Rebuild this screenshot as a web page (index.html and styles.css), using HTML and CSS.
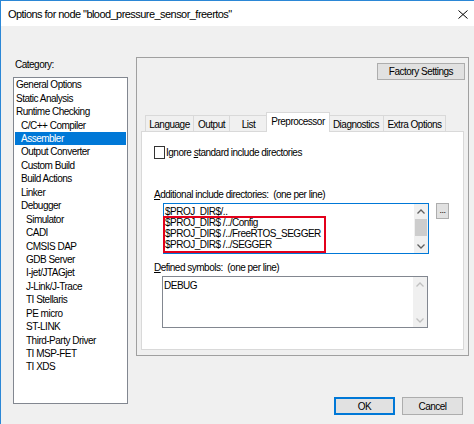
FILE: index.html
```html
<!DOCTYPE html>
<html>
<head>
<meta charset="utf-8">
<link rel="stylesheet" href="styles.css">
</head>
<body>
<div class="window">
  <div class="titlebar">
    <span class="title">Options for node "blood_pressure_sensor_freertos"</span>
    <svg class="close" width="10" height="9" viewBox="0 0 10 9"><path d="M0.5 0.5 L9.5 8.5 M9.5 0.5 L0.5 8.5" stroke="#000" stroke-width="1" fill="none"/></svg>
  </div>
  <div class="client">
    <div class="leftcol">
      <div class="cat-label">Category:</div>
      <div class="listbox">
        <div class="item l0">General Options</div>
        <div class="item l0">Static Analysis</div>
        <div class="item l0">Runtime Checking</div>
        <div class="item l1">C/C++ Compiler</div>
        <div class="item l1 sel">Assembler</div>
        <div class="item l1">Output Converter</div>
        <div class="item l1">Custom Build</div>
        <div class="item l1">Build Actions</div>
        <div class="item l1">Linker</div>
        <div class="item l1">Debugger</div>
        <div class="item l2">Simulator</div>
        <div class="item l2">CADI</div>
        <div class="item l2">CMSIS DAP</div>
        <div class="item l2">GDB Server</div>
        <div class="item l2">I-jet/JTAGjet</div>
        <div class="item l2">J-Link/J-Trace</div>
        <div class="item l2">TI Stellaris</div>
        <div class="item l2">PE micro</div>
        <div class="item l2">ST-LINK</div>
        <div class="item l2">Third-Party Driver</div>
        <div class="item l2">TI MSP-FET</div>
        <div class="item l2">TI XDS</div>
      </div>
    </div>
    <div class="rightcol">
      <div class="frame">
        <div class="factory-row"><div class="btn factory">Factory Settings</div></div>
        <div class="tabs">
          <div class="tab t-lang">Language</div>
          <div class="tab t-out">Output</div>
          <div class="tab t-list">List</div>
          <div class="tab t-pre sel">Preprocessor</div>
          <div class="tab t-diag">Diagnostics</div>
          <div class="tab t-extra">Extra Options</div>
        </div>
        <div class="page">
          <div class="check-row">
            <span class="checkbox"></span>
            <span class="check-label">Ignore <u>s</u>tandard include directories</span>
          </div>
          <div class="label inc-label"><u>A</u>dditional include directories:&nbsp; (one per line)</div>
          <div class="inc-row">
            <div class="edit focused">
              <div class="edit-text">
                <div class="line">$PROJ_DIR$/..</div>
                <div class="line">$PROJ_DIR$ /../Config</div>
                <div class="line">$PROJ_DIR$ /../FreeRTOS_SEGGER</div>
                <div class="line">$PROJ_DIR$ /../SEGGER</div>
              </div>
              <div class="vscroll">
                <div class="arrow"><svg width="8" height="5" viewBox="0 0 8 5"><path d="M0.5 4.5 L4 1 L7.5 4.5" stroke="#606060" stroke-width="1.3" fill="none"/></svg></div>
                <div class="track"><div class="thumb"></div></div>
                <div class="arrow"><svg width="8" height="5" viewBox="0 0 8 5"><path d="M0.5 0.5 L4 4 L7.5 0.5" stroke="#606060" stroke-width="1.3" fill="none"/></svg></div>
              </div>
              <div class="redbox"></div>
            </div>
            <div class="btn dots">...</div>
          </div>
          <div class="label def-label"><u>D</u>efined symbols:&nbsp; (one per line)</div>
          <div class="edit plain">
            <div class="edit-text">
              <div class="line debug">DEBUG</div>
            </div>
            <div class="vscroll disabled">
              <div class="arrow"><svg width="8" height="5" viewBox="0 0 8 5"><path d="M0.5 4.5 L4 1 L7.5 4.5" stroke="#c0c0c0" stroke-width="1.3" fill="none"/></svg></div>
              <div class="track"></div>
              <div class="arrow"><svg width="8" height="5" viewBox="0 0 8 5"><path d="M0.5 0.5 L4 4 L7.5 0.5" stroke="#c0c0c0" stroke-width="1.3" fill="none"/></svg></div>
            </div>
          </div>
        </div>
      </div>
      <div class="buttons">
        <div class="btn okbtn">OK</div>
        <div class="btn cancelbtn">Cancel</div>
      </div>
    </div>
  </div>
</div>
</body>
</html>
```

FILE: styles.css
```css
* { box-sizing: border-box; }
html, body {
  margin: 0;
  padding: 0;
  width: 474px;
  height: 424px;
  overflow: hidden;
  background: #f0f0f0;
}
body {
  font-family: "Liberation Sans", Arial, sans-serif;
  font-size: 10px;
  letter-spacing: -0.5px;
  color: #000;
}
.window {
  width: 474px;
  height: 424px;
  border-top: 1px solid #2b87d6;
  border-left: 1px solid #2b87d6;
  display: flex;
  flex-direction: column;
}
.titlebar {
  height: 25px;
  flex: none;
  background: #fff;
  display: flex;
  align-items: center;
  justify-content: space-between;
  padding: 0 7px 0 7px;
}
.title {
  font-size: 11px;
  letter-spacing: -0.55px;
  line-height: 14px;
  padding-top: 1px;
}
.close {
  display: block;
  margin-right: -0.5px;
  margin-top: 1px;
}
.client {
  flex: 1;
  background: #f0f0f0;
  display: flex;
  padding: 31px 0 0 12px;
}
.leftcol {
  width: 115px;
  flex: none;
  display: flex;
  flex-direction: column;
}
.cat-label {
  line-height: 13px;
  margin: 1px 0 0 2px;
  height: 19px;
}
.listbox {
  width: 115px;
  height: 327px;
  background: #fff;
  border: 1px solid #828790;
  padding-top: 0.3px;
}
.item {
  height: 13.44px;
  line-height: 13.44px;
  margin: 0 1px;
  white-space: nowrap;
}
.item.l0 { padding-left: 1px; }
.item.l1 { padding-left: 6px; }
.item.l2 { padding-left: 11px; }
.item.sel {
  background: #0078d7;
  color: #fff;
}
.rightcol {
  margin-left: 8px;
  width: 333px;
  display: flex;
  flex-direction: column;
}
.frame {
  width: 333px;
  height: 299px;
  border: 1px solid #a0a0a0;
  display: flex;
  flex-direction: column;
  padding: 5px 4px 5px 4px;
}
.factory-row {
  display: flex;
  justify-content: flex-end;
  margin-right: -1px;
}
.btn {
  background: #e1e1e1;
  border: 1px solid #adadad;
  display: flex;
  align-items: center;
  justify-content: center;
  line-height: 13px;
  white-space: nowrap;
}
.factory {
  width: 88px;
  height: 17px;
}
.tabs {
  margin-top: 32px;
  height: 19px;
  display: flex;
  align-items: flex-end;
  padding-left: 4px;
  position: relative;
  z-index: 1;
}
.tab {
  height: 16px;
  border: 1px solid #d9d9d9;
  border-bottom: none;
  background: #f0f0f0;
  display: flex;
  align-items: center;
  justify-content: center;
  line-height: 13px;
  padding-top: 1px;
  margin-left: -1px;
  white-space: nowrap;
  flex: none;
}
.tab.t-lang { width: 49px; margin-left: 0; }
.tab.t-out { width: 37px; }
.tab.t-list { width: 39px; }
.tab.t-pre {
  width: 64px;
  margin-left: -2px;
  height: 20px;
  margin-bottom: -1px;
  background: #fff;
  padding-top: 0;
  padding-bottom: 3px;
}
.tab.t-diag { width: 56px; margin-left: -2px; position: relative; z-index: -1; }
.tab.t-extra { width: 63px; }
.page {
  flex: 1;
  background: #fff;
  border: 1px solid #d9d9d9;
  display: flex;
  flex-direction: column;
  padding: 14px 0 0 12px;
}
.check-row {
  display: flex;
  align-items: center;
  height: 13px;
}
.checkbox {
  width: 11px;
  height: 13px;
  border: 1px solid #333;
  background: #fff;
  flex: none;
}
.check-label {
  margin-left: 1px;
  line-height: 13px;
}
.label {
  line-height: 13px;
  height: 13px;
}
.inc-label { margin-top: 29px; }
.inc-row {
  display: flex;
  align-items: flex-start;
  margin-top: 2px;
  margin-left: 9px;
}
.edit {
  position: relative;
  width: 266px;
  background: #fff;
  display: flex;
}
.edit.focused {
  height: 51px;
  border: 1px solid #0078d7;
}
.edit.plain {
  height: 52px;
  border: 1px solid #828790;
  margin-left: 8px;
  margin-top: 2px;
}
.edit-text {
  flex: 1;
  overflow: hidden;
  padding-left: 1px;
}
.edit.focused .edit-text { padding-top: 1.5px; }
.line {
  line-height: 11px;
  height: 11px;
  white-space: nowrap;
}
.line.debug {
  margin-top: 2px;
  line-height: 13px;
  height: 13px;
}
.vscroll {
  width: 14px;
  flex: none;
  background: #f0f0f0;
  display: flex;
  flex-direction: column;
}
.vscroll .arrow {
  height: 14px;
  display: flex;
  align-items: center;
  justify-content: center;
  flex: none;
}
.vscroll .track {
  flex: 1;
  padding: 1px 1px;
}
.thumb {
  height: 17px;
  background: #cdcdcd;
}
.redbox {
  position: absolute;
  left: -1px;
  top: 12px;
  width: 163px;
  height: 37px;
  border: 2px solid #e3001b;
}
.dots {
  width: 13px;
  height: 16px;
  margin-left: 7px;
  align-items: flex-end;
  font-size: 9px;
  line-height: 9px;
  padding-bottom: 3px;
  letter-spacing: -0.5px;
}
.def-label { margin-top: 7px; }
.buttons {
  display: flex;
  justify-content: flex-end;
  gap: 7px;
  margin-top: 41px;
  margin-right: 6px;
}
.okbtn, .cancelbtn {
  width: 61px;
  height: 18px;
}
.okbtn {
  border: 1px solid #0078d7;
  box-shadow: inset 0 0 0 1px #0078d7;
}
```
